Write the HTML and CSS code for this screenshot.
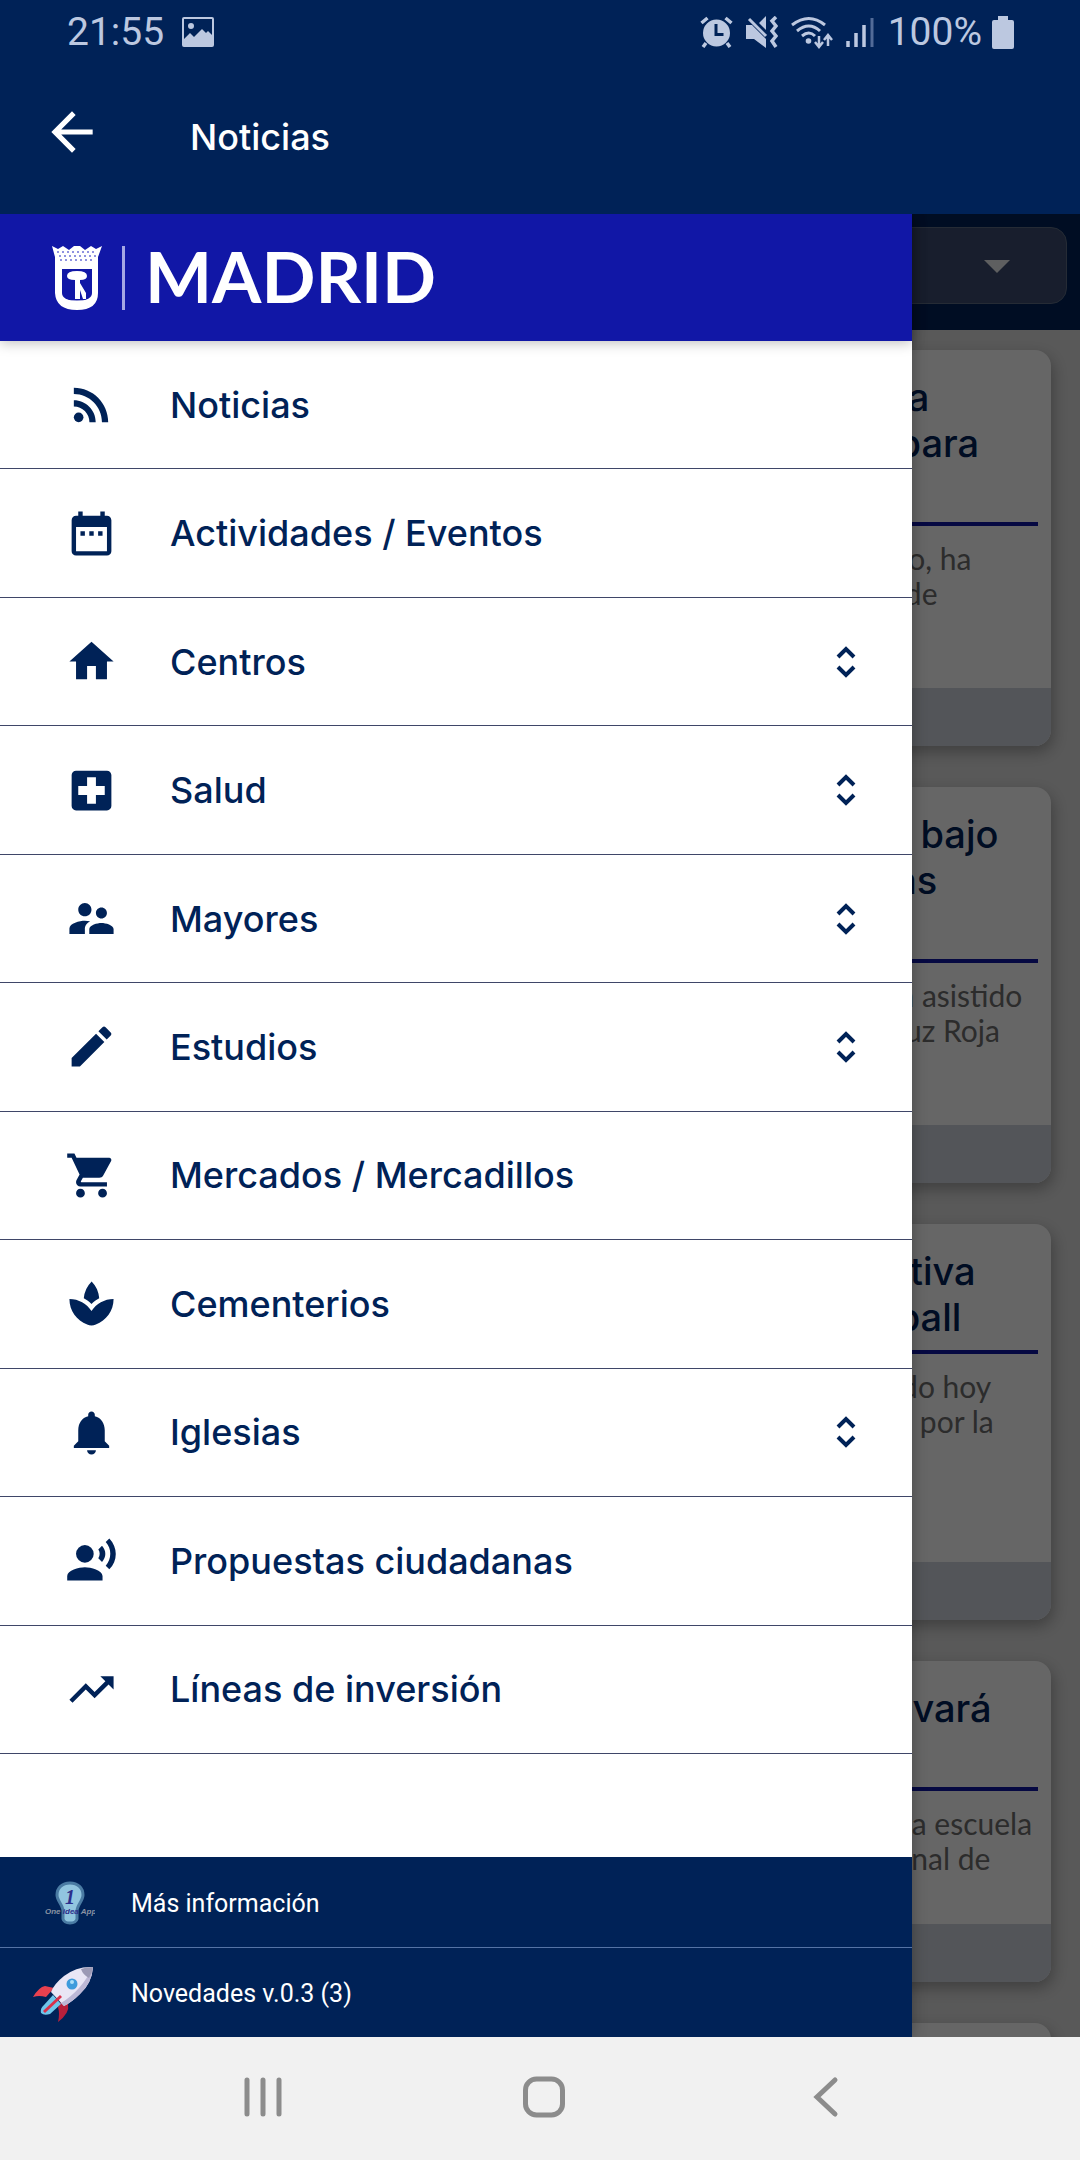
FILE: index.html
```html
<!DOCTYPE html>
<html lang="es">
<head>
    <meta charset="UTF-8">
    <meta name="viewport" content="width=device-width, initial-scale=1.0">
    <title>Noticias</title>
    <link rel="stylesheet" href="styles.css">
</head>
<body>
    <div class="status-bar">
        <span>21:55</span>
        <svg class="status-picture" width="32" height="30" viewBox="0 0 32 30"><path fill="currentColor" fill-rule="evenodd" d="M2 0h28a2 2 0 0 1 2 2v26a2 2 0 0 1-2 2H2a2 2 0 0 1-2-2V2a2 2 0 0 1 2-2zm0 2v20l6-6 4 4 8-8 4 4 2-2 4 4V2zM9 6a3 3 0 1 1 0 6 3 3 0 0 1 0-6z"/></svg>
        <div class="status-icons">
            <svg width="33" height="32" viewBox="0 0 33 32">
                <path fill="currentColor" fill-rule="evenodd" d="M16.500 3.500a13.500 13.500 0 1 1 0 27 13.500 13.500 0 0 1 0-27zM14.500 8v12h9v-3h-6V8z"/>
                <path d="M1.500 7l6-5M31.500 7l-6-5M6 27l-3 4M27 27l3 4" fill="none" stroke="currentColor" stroke-width="3.500"/>
            </svg>
            <svg width="32" height="32" viewBox="0 0 32 32">
                <path fill="currentColor" d="M0 9h6l14 14v9L8 23H0zM13 7l7-7v14z"/>
                <path d="M3 3l17 17" fill="none" stroke="currentColor" stroke-width="3"/>
                <path d="M30 1l-4 4 4 5-4 5 4 5-4 5 4 6" fill="none" stroke="currentColor" stroke-width="3.500"/>
            </svg>
            <svg width="42" height="33" viewBox="0 0 42 33">
                <path d="M1 9q17-13 33 0M6 15q12-10 23 0M11 20q7-6 13 0" fill="none" stroke="currentColor" stroke-width="3"/>
                <circle cx="17.500" cy="25" r="2.800" fill="currentColor"/>
                <path d="M28 20v10M24 26l4 5 4-5M37 30V20M33 24l4-5 4 5" fill="none" stroke="currentColor" stroke-width="2.500"/>
            </svg>
            <svg width="28" height="31" viewBox="0 0 28 31">
                <path d="M2 24v6M10 16v14M18 8v22" stroke="currentColor" stroke-width="3.500"/>
                <path d="M26 1v29" stroke="#526b98" stroke-width="3"/>
            </svg>
        </div>
        <span>100%</span>
        <svg class="status-battery" width="22" height="33" viewBox="0 0 22 33"><path fill="currentColor" d="M6 0h10v4h4q2 0 2 2v25q0 2-2 2H2q-2 0-2-2V6q0-2 2-2h4z"/></svg>
    </div>

    <header class="top-bar">
        <button class="back" aria-label="Volver">
            <svg width="62" height="62" viewBox="0 0 24 24"><path fill="currentColor" d="M20 11H7.830l5.590-5.590L12 4l-8 8 8 8 1.410-1.410L7.830 13H20v-2z"/></svg>
        </button>
        <h1>Noticias</h1>
    </header>

    <div class="screen">
        <main class="news">
            <div class="filter">
                <select class="filter-select" aria-label="Distrito">
                    <option></option>
                </select>
                <svg class="filter-arrow" width="26" height="13" viewBox="0 0 26 13"><path fill="#fff" opacity=".9" d="M0 0h26L13 13z"/></svg>
            </div>
            <div class="cards">
                <article class="card card-tall">
                    <h2>nueva<br>que para</h2>
                    <p>Consejo, ha<br>ayuda de</p>
                    <div class="card-foot"></div>
                </article>
                <article class="card card-tall">
                    <h2>pone bajo<br>lo más</h2>
                    <p>y no ha asistido<br>con Cruz Roja</p>
                    <div class="card-foot"></div>
                </article>
                <article class="card">
                    <h2>directiva<br>goalball</h2>
                    <p>afirmado hoy<br>pasado por la</p>
                    <div class="card-foot"></div>
                </article>
                <article class="card card-short">
                    <h2>se llevará</h2>
                    <p>desde la escuela<br>y nacional de</p>
                    <div class="card-foot"></div>
                </article>
                <article class="card"></article>
            </div>
        </main>
        <div class="shade"></div>

        <aside class="drawer">
            <div class="brand">
                <svg width="50" height="64" viewBox="0 0 50 64">
                    <path fill="#fff" d="M0 0l6 3 5-3 6 4 5-4h6l5 4 6-4 5 3 6-3-4 11v36q0 17-21 17T3 47V11z"/>
                    <path fill="none" stroke="#8f92e0" stroke-width="2" stroke-dasharray="2 3" d="M5 6h40M7 10h37M8 14h35"/>
                    <path fill="#1117a6" d="M10 23h30v24q0 7-15 9-15-2-15-9z"/>
                    <path fill="#fff" d="M15 30q0-5 10-5t10 5q0 4-7 4v3l6 10v6h-3l-3-9v9h-5V34q-8 0-8-4zM12 53q13 3 26 0v2q-13 3-26 0z"/>
                </svg>
                <span class="brand-line"></span>
                <span class="brand-name">MADRID</span>
            </div>
            <nav class="menu">
                <a href="#"><svg class="icon" viewBox="0 0 24 24"><circle cx="6.180" cy="17.820" r="2.180"/><path d="M4 4.440v2.830c7.030 0 12.730 5.700 12.730 12.730h2.830c0-8.590-6.970-15.560-15.560-15.560zm0 5.660v2.830c3.900 0 7.070 3.170 7.070 7.070h2.830c0-5.470-4.430-9.900-9.900-9.900z"/></svg><span>Noticias</span></a>
                <a href="#"><svg class="icon" viewBox="0 0 24 24"><path d="M9 11H7v2h2v-2zm4 0h-2v2h2v-2zm4 0h-2v2h2v-2zm2-7h-1V2h-2v2H8V2H6v2H5c-1.110 0-1.990.9-1.990 2L3 20a2 2 0 0 0 2 2h14c1.100 0 2-.9 2-2V6c0-1.100-.9-2-2-2zm0 16H5V9h14v11z"/></svg><span>Actividades / Eventos</span></a>
                <a href="#"><svg class="icon" viewBox="0 0 24 24"><path d="M10 20v-6h4v6h5v-8h3L12 3 2 12h3v8z"/></svg><span>Centros</span><svg class="unfold" viewBox="0 0 24 36"><path d="M4 13l8-8 8 8M4 23l8 8 8-8"/></svg></a>
                <a href="#"><svg class="icon" viewBox="0 0 24 24"><path d="M19 3H5c-1.100 0-1.990.9-1.990 2L3 19c0 1.100.9 2 2 2h14c1.100 0 2-.9 2-2V5c0-1.100-.9-2-2-2zm-1 11h-4v4h-4v-4H6v-4h4V6h4v4h4v4z"/></svg><span>Salud</span><svg class="unfold" viewBox="0 0 24 36"><path d="M4 13l8-8 8 8M4 23l8 8 8-8"/></svg></a>
                <a href="#"><svg class="icon" viewBox="0 0 24 24"><path d="M16.500 12c1.380 0 2.490-1.120 2.490-2.500S17.880 7 16.500 7 14 8.120 14 9.500s1.120 2.500 2.500 2.500zM9 11c1.660 0 2.990-1.340 2.990-3S10.660 5 9 5 6 6.340 6 8s1.340 3 3 3zm7.500 3c-1.830 0-5.500.92-5.500 2.750V19h11v-2.250c0-1.830-3.670-2.750-5.500-2.750zM9 13c-2.330 0-7 1.170-7 3.500V19h7v-2.250c0-.85.33-2.340 2.370-3.470C10.500 13.100 9.660 13 9 13z"/></svg><span>Mayores</span><svg class="unfold" viewBox="0 0 24 36"><path d="M4 13l8-8 8 8M4 23l8 8 8-8"/></svg></a>
                <a href="#"><svg class="icon" viewBox="0 0 24 24"><path d="M3 17.250V21h3.750L17.810 9.940l-3.750-3.750L3 17.250zM20.710 7.040a1 1 0 0 0 0-1.410l-2.340-2.340a1 1 0 0 0-1.410 0l-1.830 1.830 3.750 3.750 1.830-1.830z"/></svg><span>Estudios</span><svg class="unfold" viewBox="0 0 24 36"><path d="M4 13l8-8 8 8M4 23l8 8 8-8"/></svg></a>
                <a href="#"><svg class="icon" viewBox="0 0 24 24"><path d="M7 18c-1.100 0-1.990.9-1.990 2S5.900 22 7 22s2-.9 2-2-.9-2-2-2zM1 2v2h2l3.600 7.590-1.350 2.450c-.16.28-.25.610-.25.960 0 1.100.9 2 2 2h12v-2H7.420c-.14 0-.25-.11-.25-.25l.03-.12.9-1.630h7.450c.75 0 1.410-.41 1.750-1.030l3.580-6.490A1 1 0 0 0 20 4H5.210l-.94-2H1zm16 16c-1.100 0-1.990.9-1.990 2s.89 2 1.990 2 2-.9 2-2-.9-2-2-2z"/></svg><span>Mercados / Mercadillos</span></a>
                <a href="#"><svg class="icon" viewBox="0 0 24 24"><path d="M8.550 12c-1.070-.71-2.250-1.270-3.530-1.610 1.280.34 2.460.9 3.530 1.610zm10.430-1.610c-1.290.34-2.490.91-3.570 1.640 1.080-.73 2.280-1.300 3.570-1.640zM15.490 9.630c-.18-2.790-1.310-5.510-3.430-7.630a12.188 12.188 0 0 0-3.550 7.630c1.280.68 2.460 1.560 3.490 2.630 1.030-1.060 2.210-1.940 3.490-2.630zm-3.490 5.820C9.850 12.170 6.180 10 2 10c0 5.320 3.360 9.820 8.030 11.490.63.23 1.290.4 1.970.51.68-.12 1.330-.29 1.970-.51C18.640 19.820 22 15.320 22 10c-4.180 0-7.850 2.170-10 5.450z"/></svg><span>Cementerios</span></a>
                <a href="#"><svg class="icon" viewBox="0 0 24 24"><path d="M12 22c1.100 0 2-.9 2-2h-4c0 1.100.89 2 2 2zm6-6v-5c0-3.070-1.640-5.640-4.500-6.320V4c0-.83-.67-1.500-1.500-1.500s-1.500.67-1.500 1.500v.68C7.630 5.360 6 7.920 6 11v5l-2 2v1h16v-1l-2-2z"/></svg><span>Iglesias</span><svg class="unfold" viewBox="0 0 24 36"><path d="M4 13l8-8 8 8M4 23l8 8 8-8"/></svg></a>
                <a href="#"><svg class="icon" viewBox="0 0 24 24"><circle cx="9" cy="9" r="4"/><path d="M9 15c-2.670 0-8 1.340-8 4v2h16v-2c0-2.660-5.330-4-8-4zm7.760-9.640l-1.680 1.690c.84 1.180.84 2.710 0 3.890l1.680 1.690c2.020-2.020 2.020-5.070 0-7.270zM20.070 2l-1.630 1.630c2.770 3.020 2.770 7.560 0 10.740L20.070 16c3.900-3.890 3.910-9.950 0-14z"/></svg><span>Propuestas ciudadanas</span></a>
                <a href="#"><svg class="icon" viewBox="0 0 24 24"><path d="M16 6l2.290 2.290-4.880 4.880-4-4L2 16.590 3.410 18l6-6 4 4 6.300-6.290L22 12V6z"/></svg><span>Líneas de inversión</span></a>
            </nav>
            <div class="drawer-foot">
                <a href="#">
                    <span class="foot-icon"><svg width="50" height="44" viewBox="0 0 50 44">
                        <path fill="#91c5df" stroke="#4a7ba3" stroke-width="3" d="M25 2c-8 0-13 5-13 12 0 6 6 10 6 16v8q1 4 7 4t7-4v-8c0-6 6-10 6-16 0-7-5-12-13-12z"/>
                        <text class="bulb-one" x="20" y="23">1</text>
                        <text class="bulb-name" x="0" y="33"><tspan fill="#8a93a3">One </tspan><tspan fill="#2c2f8c">idea</tspan><tspan fill="#8a93a3"> App</tspan></text>
                    </svg></span>
                    <span>Más información</span>
                </a>
                <a href="#">
                    <span class="foot-icon"><svg width="62" height="56" viewBox="0 0 62 56">
                        <path fill="#e8414f" d="M0 31q6-10 12-11l9 2-8 9q-7-2-13 0z"/>
                        <path fill="#b8203c" d="M35 38q2 9-10 18 2-8 0-15l5-9z"/>
                        <path fill="#6fc6ea" d="M20 29l8 9-11 10q-6 2-9-1-1-5 3-8z"/>
                        <path fill="#e9e6f5" d="M60 1q-1 16-13 27-8 8-16 12L18 26q3-8 13-16Q44 0 60 1z"/>
                        <path fill="#bdb8d6" d="M60 1q-1 16-13 27-8 8-16 12l-3-3Q48 25 60 1z"/>
                        <path fill="#9c9ab5" d="M60 1q-1 6-4 11-6-3-8-9 5-2 12-2z"/>
                        <circle cx="39" cy="18" r="5.500" fill="#3d9bdc"/>
                        <circle cx="39" cy="16" r="2" fill="#a9def8"/>
                        <path d="M28 30L11 46" stroke="#d9304a" stroke-width="3"/>
                    </svg></span>
                    <span>Novedades v.0.3 (3)</span>
                </a>
            </div>
        </aside>
    </div>

    <div class="nav-bar">
        <button aria-label="Recientes"><svg width="42" height="42" viewBox="0 0 42 42"><path d="M5 4v34M21 4v34M37 4v34"/></svg></button>
        <button aria-label="Inicio"><svg width="42" height="42" viewBox="0 0 42 42"><rect x="2.500" y="3" width="37" height="36" rx="11"/></svg></button>
        <button aria-label="Atrás"><svg width="42" height="42" viewBox="0 0 42 42"><path d="M30 4L12 21l18 17"/></svg></button>
    </div>
</body>
</html>
```

FILE: styles.css
```css
* {
    box-sizing: border-box;
}
body {
    margin: 0;
    height: 100vh;
    display: flex;
    flex-direction: column;
    background: #002257;
    font-family: Inter, "Noto Sans", sans-serif;
    color: #002257;
}
a {
    color: inherit;
    text-decoration: none;
}
button {
    padding: 0;
    border: none;
    background: none;
    color: inherit;
    cursor: pointer;
}
svg {
    display: block;
    flex: none;
}

/* status bar */
.status-bar {
    display: flex;
    align-items: center;
    height: 64px;
    padding: 0 66px 0 67px;
    font-family: Roboto, sans-serif;
    font-size: 39px;
    color: #bcc8e0;
}
.status-picture {
    margin-left: 18px;
}
.status-icons {
    display: flex;
    align-items: center;
    gap: 13px;
    margin-left: auto;
    margin-right: 14px;
}
.status-battery {
    margin-left: 10px;
}

.top-bar {
    display: flex;
    align-items: center;
    gap: 87px;
    height: 150px;
    padding: 0 41px 14px;
    color: #fff;
}
.top-bar h1 {
    margin: 10px 0 0;
    font-size: 36px;
    font-weight: 500;
}

.screen {
    position: relative;
    flex: 1;
    min-height: 0;
    overflow: hidden;
}

/* news list */
.news {
    height: 100%;
    background: #dfdfdf;
}
.filter {
    position: relative;
    height: 116px;
    padding: 13px;
    background: #002257;
}
.filter-select {
    appearance: none;
    width: 100%;
    height: 77px;
    padding: 0 30px;
    border: 1px solid #5c6b85;
    border-radius: 16px;
    background: #3c4d70;
    color: #fff;
    font-family: inherit;
    font-size: 34px;
}
.filter-arrow {
    position: absolute;
    right: 70px;
    top: 46px;
}
.cards {
    display: flex;
    flex-direction: column;
    gap: 41px;
    padding: 20px 29px;
}
.card {
    display: flex;
    flex-direction: column;
    flex: none;
    height: 396px;
    border-radius: 16px;
    background: #fff;
    box-shadow: 2px 6px 16px rgba(0, 0, 0, 0.3);
    overflow: hidden;
    white-space: nowrap;
}
.card-short {
    height: 321px;
}
.card h2 {
    min-height: 130px;
    margin: 0 13px;
    padding: 24px 0 10px 76%;
    border-bottom: 4px solid #1117a6;
    font-size: 38px;
    line-height: 46px;
    font-weight: 500;
}
.card-tall h2 {
    min-height: 176px;
}
.card p {
    margin: 0 13px;
    padding: 15px 0 0 76%;
    font-family: Lato, sans-serif;
    font-size: 30px;
    line-height: 35px;
    color: #6e6e6e;
}
.card-foot {
    height: 58px;
    margin-top: auto;
    background: #cfd4de;
}
.shade {
    position: absolute;
    inset: 0;
    background: rgba(0, 0, 0, 0.6);
}

/* side menu */
.drawer {
    position: absolute;
    inset: 0 auto 0 0;
    width: 84.4%;
    display: flex;
    flex-direction: column;
    background: #fff;
    box-shadow: 0 0 14px rgba(0, 0, 0, 0.3);
}
.brand {
    display: flex;
    align-items: center;
    height: 127px;
    padding-left: 52px;
    background: #1117a6;
    box-shadow: 0 2px 12px rgba(0, 0, 0, 0.25);
}
.brand-line {
    width: 3px;
    height: 64px;
    margin: 0 20px;
    background: #a5a7e4;
}
.brand-name {
    padding-bottom: 4px;
    font-family: Lato, sans-serif;
    font-size: 71px;
    line-height: 80px;
    font-weight: 700;
    color: #fff;
}
.menu {
    flex: 1;
    display: grid;
    grid-auto-rows: 1fr;
    margin-bottom: 103px;
}
.menu a {
    display: flex;
    align-items: center;
    padding: 0 54px 0 65px;
    border-bottom: 1px solid #3f4668;
    font-size: 36px;
    font-weight: 500;
}
.icon {
    width: 53px;
    height: 53px;
    margin-right: 52px;
    fill: currentColor;
}
.unfold {
    width: 24px;
    height: 36px;
    margin-left: auto;
    fill: none;
    stroke: currentColor;
    stroke-width: 4;
}
.drawer-foot {
    background: #002257;
    color: #fff;
    font-family: Roboto, sans-serif;
    font-size: 25px;
}
.drawer-foot a {
    display: flex;
    align-items: center;
    gap: 36px;
    height: 90px;
    padding-top: 2px;
}
.drawer-foot a + a {
    border-top: 1px solid #5573a5;
}
.foot-icon {
    display: flex;
    justify-content: flex-end;
    width: 95px;
}
.bulb-one {
    font: italic bold 20px "Liberation Serif", serif;
    fill: #2c2f8c;
}
.bulb-name {
    font: italic bold 8px "Liberation Sans", sans-serif;
}

/* system buttons */
.nav-bar {
    display: grid;
    grid-template-columns: repeat(3, 1fr);
    height: 123px;
    padding: 0 113px 4px 122px;
    background: #f1f1f1;
}
.nav-bar button {
    display: flex;
    align-items: center;
    justify-content: center;
}
.nav-bar svg {
    fill: none;
    stroke: #8c8c8c;
    stroke-width: 5;
    stroke-linecap: round;
}
```
